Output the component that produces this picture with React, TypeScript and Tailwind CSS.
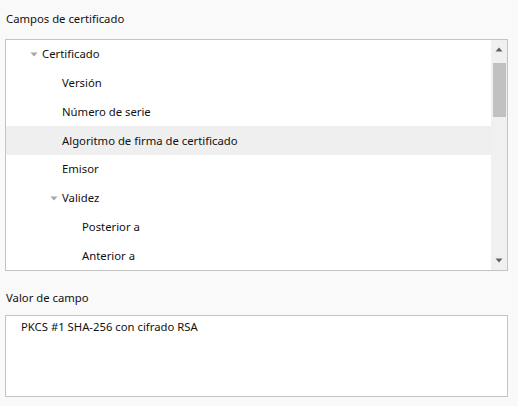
import React from "react";

const Tri = () => (
  <svg width="8" height="5" viewBox="0 0 8 5" className="shrink-0">
    <path d="M0.5 0.5 H7.5 L4 4.5 Z" fill="#a6a6a6" />
  </svg>
);

type Row = { label: string; level: number; arrow?: boolean; selected?: boolean };

const rows: Row[] = [
  { label: "Certificado", level: 0, arrow: true },
  { label: "Versión", level: 1 },
  { label: "Número de serie", level: 1 },
  { label: "Algoritmo de firma de certificado", level: 1, selected: true },
  { label: "Emisor", level: 1 },
  { label: "Validez", level: 1, arrow: true },
  { label: "Posterior a", level: 2 },
  { label: "Anterior a", level: 2 },
];

const padClass = ["pl-[24px]", "pl-[44px]", "pl-[64px]"];

export default function App() {
  return (
    <div
      className="w-[518px] h-[406px] bg-[#f9f9f9] text-[11.3px] text-[#111] pt-[9px] pl-[5px] pr-[10px]"
      style={{ fontFamily: '"Noto Sans", "Open Sans", sans-serif' }}
    >
      <div className="h-[18px] leading-[18px] pl-px pt-px">Campos de certificado</div>
      <div className="mt-[12px] h-[232px] border border-[#c3c3c3] bg-white flex overflow-hidden">
        <div className="flex-1 flex flex-col">
          {rows.map((r) => (
            <div
              key={r.label}
              className={`h-[29px] flex items-center pt-px ${padClass[r.level]} ${r.selected ? "bg-[#efefef]" : ""}`}
            >
              {r.arrow ? (
                <span className="w-[12px] flex items-center">
                  <Tri />
                </span>
              ) : (
                <span className="w-[12px]" />
              )}
              <span>{r.label}</span>
            </div>
          ))}
        </div>
        <div className="w-[16px] bg-[#f0f0f0] flex flex-col items-center">
          <div className="h-[17px] flex items-center justify-center pt-[2px]">
            <svg width="8" height="5" viewBox="0 0 8 5">
              <path d="M0.5 4.5 H7.5 L4 0.5 Z" fill="#606060" />
            </svg>
          </div>
          <div className="mt-[6px] w-[13px] h-[54px] bg-[#c1c1c1]" />
          <div className="flex-1" />
          <div className="h-[17px] flex items-center justify-center pb-[2px]">
            <svg width="8" height="5" viewBox="0 0 8 5">
              <path d="M0.5 0.5 H7.5 L4 4.5 Z" fill="#606060" />
            </svg>
          </div>
        </div>
      </div>
      <div className="mt-[17px] h-[18px] leading-[18px] pl-px pt-px">Valor de campo</div>
      <div className="mt-[9px] h-[82px] border border-[#c3c3c3] bg-white pl-[15px] pt-[2px] leading-[18px]">
        PKCS #1 SHA-256 con cifrado RSA
      </div>
    </div>
  );
}
